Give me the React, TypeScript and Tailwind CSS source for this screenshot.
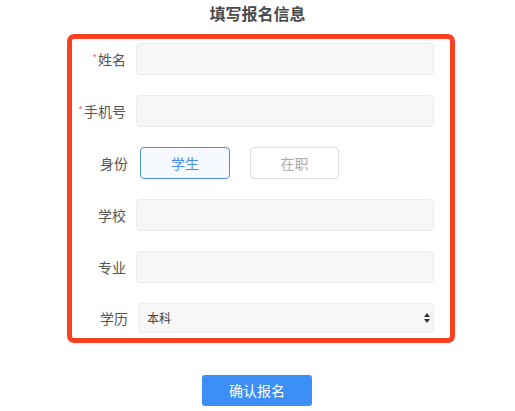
import React from "react";

const font = { fontFamily: '"Noto Sans CJK SC", "Noto Sans", sans-serif' };

const Label = ({ text, required }: { text: string; required?: boolean }) => (
  <div className="w-[54px] shrink-0 text-right text-[14px] leading-none text-[#555]">
    {required && <span className="relative -top-[3px] mr-[1px] text-[10px] text-[#f56c6c]">*</span>}
    {text}
  </div>
);

const Field = () => (
  <input className="h-8 flex-1 rounded-[4px] border border-[#ececec] bg-[#f7f7f7] px-2 text-[13px] outline-none" />
);

export default function App() {
  return (
    <div className="w-[515px] h-[411px] bg-white" style={font}>
      <div className="pt-[3px] text-center text-[16px] font-bold leading-[20px] text-[#4a4a4a]">
        填写报名信息
      </div>

      <div className="ml-[67px] mt-[11px] w-[388px] rounded-[7px] border-[5px] border-[#fd4022] pt-[4px] pb-[5px] pl-0 pr-[16px]">
        <div className="flex flex-col gap-5">
          <div className="flex items-center gap-[10px]">
            <Label text="姓名" required />
            <Field />
          </div>
          <div className="flex items-center gap-[10px]">
            <Label text="手机号" required />
            <Field />
          </div>
          <div className="flex items-center">
            <div className="w-[56px] shrink-0 text-right text-[14px] leading-none text-[#555]">身份</div>
            <button className="ml-[12px] h-8 w-[90px] rounded-[4px] border border-[#4a90e8] bg-[#f6f9ff] text-[14px] text-[#4a90e8]">
              学生
            </button>
            <button className="ml-[20px] h-8 w-[89px] rounded-[4px] border border-[#dcdcdc] bg-white text-[14px] text-[#aaa]">
              在职
            </button>
          </div>
          <div className="flex items-center gap-[10px]">
            <Label text="学校" />
            <Field />
          </div>
          <div className="flex items-center gap-[10px]">
            <Label text="专业" />
            <Field />
          </div>
          <div className="flex items-center">
            <div className="w-[56px] shrink-0 text-right text-[14px] leading-none text-[#555]">学历</div>
            <div className="relative ml-[10px] flex-1">
              <select className="h-[30px] w-full appearance-none rounded-[4px] border border-[#ededed] bg-[#f7f7f7] pl-[8px] text-[12px] font-normal text-[#444] outline-none">
                <option>本科</option>
              </select>
              <svg className="pointer-events-none absolute right-[4px] top-[10px]" width="6" height="10" viewBox="0 0 6 10">
                <path d="M3 0 L6 4 L0 4 Z" fill="#333" />
                <path d="M3 10 L6 6 L0 6 Z" fill="#333" />
              </svg>
            </div>
          </div>
        </div>
      </div>

      <div className="mt-[32px] flex justify-center">
        <button className="ml-[-1px] h-[31px] w-[110px] rounded-[3px] bg-[#3b8ff6] text-[14px] text-white">
          确认报名
        </button>
      </div>
    </div>
  );
}
